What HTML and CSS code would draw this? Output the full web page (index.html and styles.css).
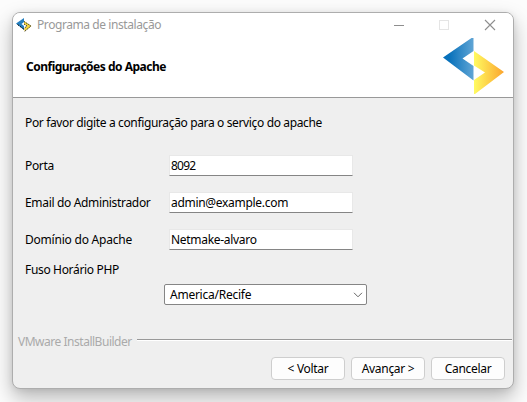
FILE: index.html
```html
<!DOCTYPE html>
<html lang="pt-BR">
<head>
<meta charset="utf-8">
<title>Programa de instalação</title>
<link rel="stylesheet" href="styles.css">
</head>
<body>
<main class="window">
  <header class="header">
    <div class="titlebar">
      <svg class="app-icon" width="16" height="15" viewBox="0 0 16 15">
        <path d="M0 5.5L8 0V4L5.5 6L8 8V12Z" fill="#247fc0"/>
        <path d="M1.5 6.5L9 12" fill="none" stroke="#111" stroke-dasharray="2 1"/>
        <path d="M8 3L15.5 8L8.5 13.5V10L11 8L8 6Z" fill="#f4d63d"/>
        <path d="M8 3.5L15 8L8.5 13.5M8 6L11 8L8.5 10" fill="none" stroke="#222" stroke-width=".9" stroke-dasharray="1.5 1"/>
      </svg>
      <span class="title">Programa de instalação</span>
      <svg class="controls" width="104" height="12" viewBox="0 0 104 12">
        <path d="M0 6.5H10" stroke="#8e8e8e"/>
        <rect x="45.5" y="1.5" width="9" height="9" fill="none" stroke="#e5e5e5"/>
        <path d="M91 1L101 11M101 1L91 11" stroke="#8e8e8e" stroke-width="1.1"/>
      </svg>
    </div>
    <div class="banner">
      <h1>Configurações do Apache</h1>
      <svg class="logo" width="62" height="57" viewBox="0 0 62 57">
        <defs>
          <linearGradient id="blue"><stop offset="0.2" stop-color="#0871bb"/><stop offset="1" stop-color="#60a5d5"/></linearGradient>
          <linearGradient id="yellow"><stop offset="0" stop-color="#fffb61"/><stop offset="1" stop-color="#fba42d"/></linearGradient>
        </defs>
        <path d="M0 19.5L28.5 0H30.5V13L19.5 20.5L30.5 28V42.5Z" fill="url(#blue)"/>
        <path d="M31 13L61 34L32 56H31V42L42 34.5L31 27.5Z" fill="url(#yellow)"/>
      </svg>
    </div>
  </header>
  <section class="content">
    <p class="intro">Por favor digite a configuração para o serviço do apache</p>
    <label class="row"><span class="label porta">Porta</span><input class="number" value="8092"></label>
    <label class="row"><span class="label email">Email do Administrador</span><input class="mail" value="admin@example.com"></label>
    <label class="row"><span class="label domain">Domínio do Apache</span><input class="host" value="Netmake-alvaro"></label>
    <div class="label zone">Fuso Horário PHP</div>
    <div class="select"><span>America/Recife</span>
      <svg width="10" height="6" viewBox="0 0 10 6"><path d="M1 .8L5 4.8L9 .8" fill="none" stroke="#666"/></svg>
    </div>
  </section>
  <footer>
    <div class="brand"><span>VMware InstallBuilder</span><i></i></div>
    <div class="actions"><button class="back">&lt; Voltar</button><button class="next">Avançar &gt;</button><button class="cancel">Cancelar</button></div>
  </footer>
</main>
</body>
</html>
```
FILE: styles.css
```css
* { box-sizing: border-box; }
body {
  margin: 0; width: 527px; height: 402px; padding: 12px; overflow: hidden;
  background: #fcfcfc; color: #000;
  font: 12px/16px "Noto Sans", "Open Sans", sans-serif;
}
.window {
  width: 502px; height: 377px; overflow: hidden;
  border: 1px solid #adadad; border-radius: 8px; background: #efefef;
  box-shadow: 0 9px 20px rgba(0,0,0,.28), 0 1px 6px rgba(0,0,0,.08);
}
.header { height: 85px; background: #fff; border-bottom: 1px solid #999; }
.titlebar { display: flex; align-items: center; height: 24px; padding-left: 3px; }
.title { margin-left: 5px; color: #999; white-space: nowrap; letter-spacing: -.42px; }
.controls { margin: 0 15px 0 auto; }
.banner { display: flex; justify-content: space-between; padding: 0 8px 0 13px; }
h1 { margin: 22px 0 0; font-size: 12px; line-height: 16px; font-weight: 700; letter-spacing: -.5px; }
.logo { margin-top: 1px; }
.content { height: 236px; padding: 17px 0 0 12px; }
.intro { margin: 0 0 24px; letter-spacing: -.36px; white-space: nowrap; }
.row { display: flex; align-items: center; height: 21px; margin-bottom: 16px; }
.label { width: 144px; letter-spacing: -.33px; white-space: nowrap; }
.domain { letter-spacing: -.22px; }
input {
  width: 184px; height: 21px; padding: 0 1px; outline: 0;
  border: 1px solid #e8e8e8; border-bottom-color: #858585; background: #fff;
  color: #000; font: inherit; letter-spacing: -.3px;
}
.number { letter-spacing: -.8px; }
.zone { margin-top: -4px; }
.select {
  display: flex; align-items: center; justify-content: space-between;
  width: 203px; height: 21px; margin: 6px 0 0 139px; padding: 0 3px 0 5px;
  border: 1px solid #858585; border-radius: 2px; background: #fff; letter-spacing: -.25px;
}
footer { height: 54px; }
.brand { display: flex; align-items: flex-start; height: 16px; padding-left: 5px; color: #aaa; letter-spacing: -.48px; }
.brand i { flex: 1; height: 2px; margin: 5px 1px 0 5px; border-top: 1px solid #999; background: #fff; }
.actions { display: flex; justify-content: flex-end; gap: 6px; padding: 7px 8px 0; }
button {
  width: 74px; height: 23px; padding: 0; border: 1px solid #cecece; border-radius: 4px;
  background: #fdfdfd; color: #000; font: inherit; letter-spacing: -.3px;
}
```
